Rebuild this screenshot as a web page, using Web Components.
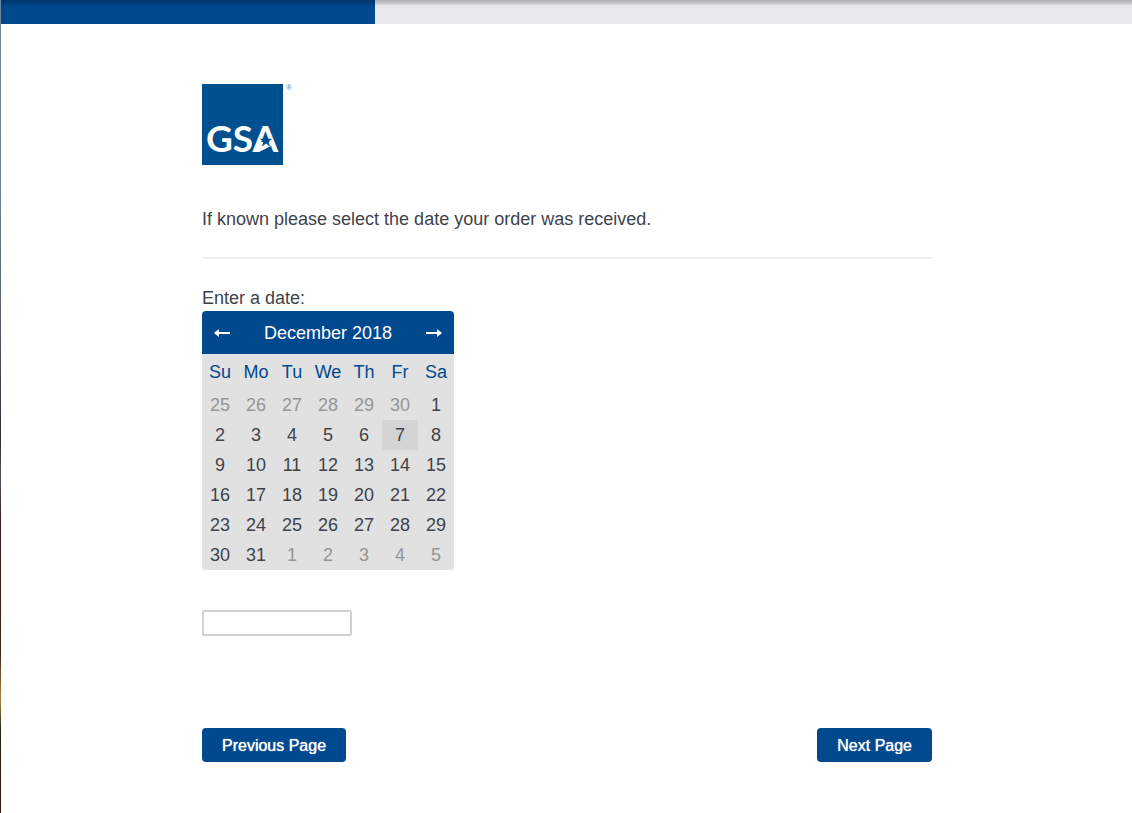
<!DOCTYPE html>
<html lang="en">
<head>
<meta charset="utf-8">
<meta name="viewport" content="width=device-width, initial-scale=1">
<title>Order received date</title>
<style>
  * { box-sizing: border-box; }
  html { min-height: 100%; display: flex; flex-direction: column; }
  body {
    flex: 1;
    margin: 0;
    padding-left: 1px;
    font-family: "Liberation Sans", Arial, sans-serif;
    font-size: 18px;
    line-height: 24px;
    color: #3e434a;
    background: linear-gradient(#75869a, #6d8093 24%, #555a70 40%, #2f2b36 54%, #55505e 59%, #3c1a1c 64%, #3a2418 80%, #b0803c 86%, #1c2410 90%, #3a1a14 96%) 0 0 / 1px 100% no-repeat #fff;
  }
</style>
</head>
<body>
<survey-page>
  <survey-progress slot="progress" value="33.1"></survey-progress>
  <gsa-logo></gsa-logo>
  <survey-question>
    If known please select the date your order was received.
    <date-picker slot="answer" label="Enter a date:" year="2018" month="12" today="7"></date-picker>
  </survey-question>
  <survey-nav>
    <nav-button slot="previous">Previous Page</nav-button>
    <nav-button slot="next">Next Page</nav-button>
  </survey-nav>
</survey-page>

<script>
const attach = (element, html) => {
  const template = document.createElement('template');
  template.innerHTML = html;
  element.attachShadow({ mode: 'open' });
  element.shadowRoot.appendChild(template.content.cloneNode(true));
}

class SurveyPage extends HTMLElement {
  constructor() {
    super();
    attach(this, `
      <style>
        :host { display: block; }
        main {
          box-sizing: border-box;
          max-width: 771px;
          margin: 0 auto;
          padding: 60px 20px 50px 21px;
        }
      </style>
      <slot name="progress"></slot>
      <main><slot></slot></main>
    `);
  }
}

class SurveyProgress extends HTMLElement {
  constructor() {
    super();
    attach(this, `
      <style>
        :host { display: block; }
        .track {
          height: 24px;
          background: #e8e8ea;
          position: relative;
        }
        .bar { height: 100%; background: #00498f; }
        .track::after {
          content: '';
          position: absolute;
          inset: 0 0 auto 0;
          height: 6px;
          background: linear-gradient(rgba(0, 0, 0, .25), rgba(0, 0, 0, .16) 50%, transparent);
        }
      </style>
      <div class="track" role="progressbar" aria-label="Survey progress"><div class="bar"></div></div>
    `);
    this.shadowRoot.querySelector('.bar').style.width = `${this.getAttribute('value')}%`
  }
}

class GsaLogo extends HTMLElement {
  constructor() {
    super();
    attach(this, `
      <style>
        :host { display: block; }
        svg { display: block; }
        .name { font: bold 37px Lato, sans-serif; fill: #fff; }
        .mark { font: 8px "Liberation Sans", sans-serif; fill: #4d7fae; }
      </style>
      <svg width="92" height="81" viewBox="0 0 92 81" role="img" aria-label="GSA">
        <rect width="81" height="81" fill="#00508f"/>
        <text class="name" x="4" y="68">GSA</text>
        <path d="M53 68l3-6 8-2 5 2-12 6z" fill="#fff"/>
        <path d="M64 50.500l1.500 4.200h4.700l-3.600 2.900 1.400 4.900-4-2.900-4 2.900 1.400-4.900-3.600-2.900h4.700z" fill="#00508f"/>
        <text class="mark" x="84" y="6">®</text>
      </svg>
    `);
  }
}

class SurveyQuestion extends HTMLElement {
  constructor() {
    super();
    attach(this, `
      <style>
        :host { display: block; margin-top: 42px; }
        .title {
          margin: 0;
          padding-bottom: 26px;
          border-bottom: 2px solid #f0f0f0;
          font: inherit;
        }
        .answer { margin-top: 27px; }
      </style>
      <h1 class="title"><slot></slot></h1>
      <div class="answer"><slot name="answer"></slot></div>
    `);
  }
}

class DatePicker extends HTMLElement {
  constructor() {
    super();
    attach(this, `
      <style>
        :host { display: block; }
        * { box-sizing: border-box; }
        label { display: block; }
        .calendar {
          width: 252px;
          margin-top: 1px;
          border-radius: 4px;
          overflow: hidden;
          background: #e1e1e1;
        }
        header {
          display: flex;
          align-items: center;
          justify-content: space-between;
          height: 43px;
          background: #00498f;
          color: #fff;
        }
        header button {
          display: flex;
          align-items: center;
          justify-content: center;
          width: 40px;
          height: 43px;
          padding: 0;
          border: 0;
          background: none;
        }
        table { width: 100%; border-collapse: collapse; table-layout: fixed; }
        th, td { padding: 0; text-align: center; }
        th { height: 36px; font-weight: normal; color: #00498f; }
        td { height: 30px; }
        td button {
          display: block;
          width: 100%;
          height: 30px;
          padding: 0;
          border: 0;
          border-radius: 2px;
          font: inherit;
          color: inherit;
          background: none;
        }
        .outside { color: #969696; }
        .today { background: #d4d4d4; }
        input {
          display: block;
          width: 150px;
          height: 26px;
          margin-top: 40px;
          padding: 2px 4px;
          border: 2px solid #d0d0d6;
          border-radius: 2px;
          font: inherit;
          background: #fff;
        }
      </style>
      <label for="date"></label>
      <div class="calendar">
        <header>
          <button type="button" aria-label="Previous month">
            <svg width="16" height="10" viewBox="0 0 16 10"><path d="M0 5L5 1v3H16v2H5v3z" fill="#fff"/></svg>
          </button>
          <span id="caption"></span>
          <button type="button" aria-label="Next month">
            <svg width="16" height="10" viewBox="0 0 16 10"><path d="M16 5L11 1v3H0v2H11v3z" fill="#fff"/></svg>
          </button>
        </header>
        <table aria-labelledby="caption">
          <thead><tr></tr></thead>
          <tbody></tbody>
        </table>
      </div>
      <input id="date" type="text">
    `);
    this.year = Number(this.getAttribute('year'))
    this.month = Number(this.getAttribute('month')) - 1
    this.today = new Date(this.year, this.month, Number(this.getAttribute('today')))
    this.shadowRoot.querySelector('label').textContent = this.getAttribute('label')
    this.shadowRoot.querySelector('thead tr').innerHTML =
      ['Su', 'Mo', 'Tu', 'We', 'Th', 'Fr', 'Sa'].map(day => `<th scope="col">${day}</th>`).join('')
    this.render()
  }

  connectedCallback() {
    const [previous, next] = this.shadowRoot.querySelectorAll('header button');
    previous.addEventListener('click', () => this.move(-1))
    next.addEventListener('click', () => this.move(1))
    this.shadowRoot.querySelector('tbody').addEventListener('click', event => {
      const button = event.target.closest('button');
      if(button) {
        this.shadowRoot.querySelector('input').value = button.dataset.date
      }
    })
  }

  move(step) {
    const date = new Date(this.year, this.month + step, 1);
    this.year = date.getFullYear()
    this.month = date.getMonth()
    this.render()
  }

  render() {
    const first = new Date(this.year, this.month, 1);
    const months = ['January', 'February', 'March', 'April', 'May', 'June', 'July',
      'August', 'September', 'October', 'November', 'December'];
    this.shadowRoot.getElementById('caption').textContent = `${months[this.month]} ${this.year}`

    // always six weeks, starting on the Sunday before the 1st
    const start = first.getDay() || 7;
    let rows = '';
    for(let week = 0; week < 6; week++) {
      rows += '<tr>'
      for(let day = 0; day < 7; day++) {
        const date = new Date(this.year, this.month, 1 - start + week * 7 + day);
        const outside = date.getMonth() !== this.month ? 'outside' : '';
        const today = date.getTime() === this.today.getTime() ? 'today' : '';
        const value = `${date.getMonth() + 1}/${date.getDate()}/${date.getFullYear()}`;
        rows += `<td><button type="button" class="${outside} ${today}" data-date="${value}">${date.getDate()}</button></td>`
      }
      rows += '</tr>'
    }
    this.shadowRoot.querySelector('tbody').innerHTML = rows
  }
}

class SurveyNav extends HTMLElement {
  constructor() {
    super();
    attach(this, `
      <style>
        :host { display: block; margin-top: 92px; }
        nav { display: flex; justify-content: space-between; }
      </style>
      <nav>
        <slot name="previous"></slot>
        <slot name="next"></slot>
      </nav>
    `);
  }
}

class NavButton extends HTMLElement {
  constructor() {
    super();
    attach(this, `
      <style>
        :host { display: block; }
        button {
          display: block;
          height: 34px;
          padding: 1px 20px 0;
          border: 0;
          border-radius: 4px;
          font: 16px "Liberation Sans", Arial, sans-serif;
          text-shadow: 0 0 1px #fff;
          color: #fff;
          background: #00498f;
        }
      </style>
      <button type="button"><slot></slot></button>
    `);
  }
}

window.customElements.define('survey-page', SurveyPage)
window.customElements.define('survey-progress', SurveyProgress)
window.customElements.define('gsa-logo', GsaLogo)
window.customElements.define('survey-question', SurveyQuestion)
window.customElements.define('date-picker', DatePicker)
window.customElements.define('survey-nav', SurveyNav)
window.customElements.define('nav-button', NavButton)
</script>
</body>
</html>
